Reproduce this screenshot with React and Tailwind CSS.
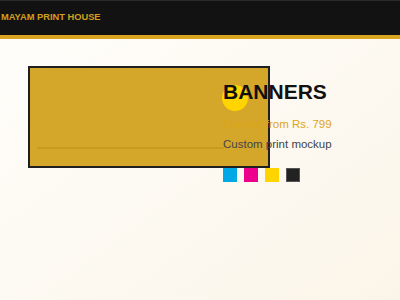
export default function App() {
  return (
    <div className="w-[400px] h-[300px] overflow-hidden flex flex-col bg-gradient-to-br from-[#fffefb] to-[#fbf5e9]" style={{ fontFamily: '"Liberation Sans", Arial, sans-serif' }}>
      <header className="h-[39px] shrink-0 bg-[#121212] border-t border-[#2a2a2a] border-b-[4px] border-b-[#d9a521] flex items-center">
        <span className="text-[9.3px] font-bold text-[#d29f1c] leading-none pl-[1px]">MAYAM PRINT HOUSE</span>
      </header>
      <main className="relative flex-1">
        <div className="absolute left-[28px] top-[27px] w-[242px] h-[102px] bg-[#d4a62a] border-2 border-[#1f1f1f]">
          <div className="absolute left-[7px] top-[79px] w-[187px] h-[2px] bg-[#c99a1f]" />
        </div>
        <div className="relative ml-[223px] pt-[41px] flex flex-col">
          <div className="absolute left-[-1px] top-[46px] w-[26px] h-[26px] rounded-full bg-[#ffd400]" />
          <h1 className="relative text-[21px] leading-[24px] font-bold text-[#111]">BANNERS</h1>
          <p className="relative mt-[10px] text-[11.5px] leading-[20px] text-[#dca51a]">Starting from Rs. 799</p>
          <p className="relative text-[11.5px] leading-[20px] text-[#444]">Custom print mockup</p>
          <div className="mt-[14px] flex gap-[7px]">
            <div className="w-[14px] h-[14px] bg-[#00a9e6]" />
            <div className="w-[14px] h-[14px] bg-[#ec008c]" />
            <div className="w-[14px] h-[14px] bg-[#ffd400]" />
            <div className="w-[14px] h-[14px] bg-[#222] border border-[#555]" />
          </div>
        </div>
      </main>
    </div>
  );
}
